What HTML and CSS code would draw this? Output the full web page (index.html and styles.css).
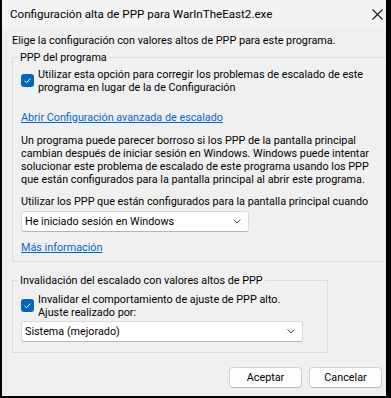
FILE: index.html
```html
<!DOCTYPE html>
<html lang="es">
<head>
  <meta charset="UTF-8" />
  <title>Configuración alta de PPP para WarInTheEast2.exe</title>
  <link rel="stylesheet" href="styles.css">
</head>
<body>
  <div class="window">
    <div class="titlebar">
      <span class="title">Configuración alta de PPP para WarInTheEast2.exe</span>
      <svg class="close" width="11" height="11" viewBox="0 0 11 11">
        <path d="M0.5 0.5 L10.5 10.5 M10.5 0.5 L0.5 10.5" stroke="#1a1a1a" stroke-width="1.1" fill="none"/>
      </svg>
    </div>

    <div class="content">
      <p class="intro">Elige la configuración con valores altos de PPP para este programa.</p>

      <fieldset class="group group-wide">
        <legend>PPP del programa</legend>
        <label class="check check-first">
          <span class="box">
            <svg width="13" height="13" viewBox="0 0 13 13"><path d="M3.6 6.8 L5.6 8.7 L9.4 4.6" stroke="#fff" stroke-width="1" fill="none"/></svg>
          </span>
          <span class="lines">Utilizar esta opción para corregir los problemas de escalado de este<br>programa en lugar de la de Configuración</span>
        </label>

        <a class="link link-first" href="#">Abrir Configuración avanzada de escalado</a>

        <p class="info lines">Un programa puede parecer borroso si los PPP de la pantalla principal<br>cambian después de iniciar sesión en Windows. Windows puede intentar<br>solucionar este problema de escalado de este programa usando los PPP<br>que están configurados para la pantalla principal al abrir este programa.</p>

        <p class="when lines">Utilizar los PPP que están configurados para la pantalla principal cuando</p>
        <div class="select select-short">
          <span>He iniciado sesión en Windows</span>
          <svg width="8" height="5" viewBox="0 0 8 5"><path d="M0.5 0.5 L4 4 L7.5 0.5" stroke="#555" stroke-width="1" fill="none"/></svg>
        </div>

        <a class="link link-more" href="#">Más información</a>
      </fieldset>

      <fieldset class="group group-narrow">
        <legend>Invalidación del escalado con valores altos de PPP</legend>
        <label class="check check-second">
          <span class="box">
            <svg width="13" height="13" viewBox="0 0 13 13"><path d="M3.6 6.8 L5.6 8.7 L9.4 4.6" stroke="#fff" stroke-width="1" fill="none"/></svg>
          </span>
          <span class="lines">Invalidar el comportamiento de ajuste de PPP alto.<br>Ajuste realizado por:</span>
        </label>
        <div class="select select-long">
          <span>Sistema (mejorado)</span>
          <svg width="8" height="5" viewBox="0 0 8 5"><path d="M0.5 0.5 L4 4 L7.5 0.5" stroke="#555" stroke-width="1" fill="none"/></svg>
        </div>
      </fieldset>

      <div class="buttons">
        <button class="btn">Aceptar</button>
        <button class="btn">Cancelar</button>
      </div>
    </div>
  </div>
</body>
</html>
```

FILE: styles.css
```css
html, body {
    margin: 0;
    padding: 0;
    background: #000;
}
body {
    font-family: Roboto, "Noto Sans", sans-serif;
    font-size: 10.8px;
    line-height: 13px;
    color: #000;
}
.window {
    width: 391px;
    height: 398px;
    box-sizing: border-box;
    border-left: 2px solid #000;
    border-right: 5px solid #000;
    border-bottom: 2px solid #000;
    background: #f0f0f0;
    overflow: hidden;
}
.titlebar {
    height: 28px;
    background: #f3f3f3;
    display: flex;
    align-items: center;
    justify-content: space-between;
    padding: 1px 3px 0 8px;
    box-sizing: border-box;
}
.title {
    font-size: 11.6px;
}
.content {
    padding: 6px 0 0 10px;
    overflow: hidden;
}
p {
    margin: 0;
}
.lines {
    white-space: nowrap;
}
.group {
    margin: 4px 0 0 0;
    padding: 0 8px 7px 8px;
    border: 1px solid #dcdcdc;
    min-width: 0;
}
.group legend {
    padding: 0 2px;
    margin-left: -3px;
}
.group-wide {
    width: 400px;
    box-sizing: border-box;
}
.group-narrow {
    width: 316px;
    box-sizing: border-box;
    margin-top: 12px;
    padding-bottom: 10px;
}
.check {
    display: flex;
    gap: 4px;
}
.check-first {
    margin-top: 4px;
}
.check-second {
    margin-top: 6px;
}
.box {
    flex: none;
    width: 13px;
    height: 13px;
    margin-top: 6px;
    background: #0067c0;
    border-radius: 3px;
    display: flex;
}
.link {
    display: block;
    color: #0066cc;
    text-decoration: underline;
    width: max-content;
}
.link-first {
    margin-top: 17px;
}
.info {
    margin-top: 10px;
}
.when {
    margin-top: 9px;
}
.select {
    height: 21px;
    box-sizing: border-box;
    background: #fff;
    border: 1px solid #d9d9d9;
    border-bottom-color: #b4b4b4;
    border-radius: 3px;
    display: flex;
    align-items: center;
    justify-content: space-between;
    padding: 0 7px 0 3px;
}
.select-short {
    width: 228px;
    margin-top: 3px;
}
.select-long {
    width: 282px;
    margin-top: 2px;
}
.link-more {
    margin-top: 9px;
}
.buttons {
    display: flex;
    justify-content: flex-end;
    gap: 7px;
    margin-top: 14px;
    padding-right: 4px;
}
.btn {
    width: 73px;
    height: 21px;
    font-family: inherit;
    font-size: 10.8px;
    background: #fdfdfd;
    border: 1px solid #d0d0d0;
    border-bottom-color: #b8b8b8;
    border-radius: 4px;
    padding: 0;
    color: #000;
}
```
